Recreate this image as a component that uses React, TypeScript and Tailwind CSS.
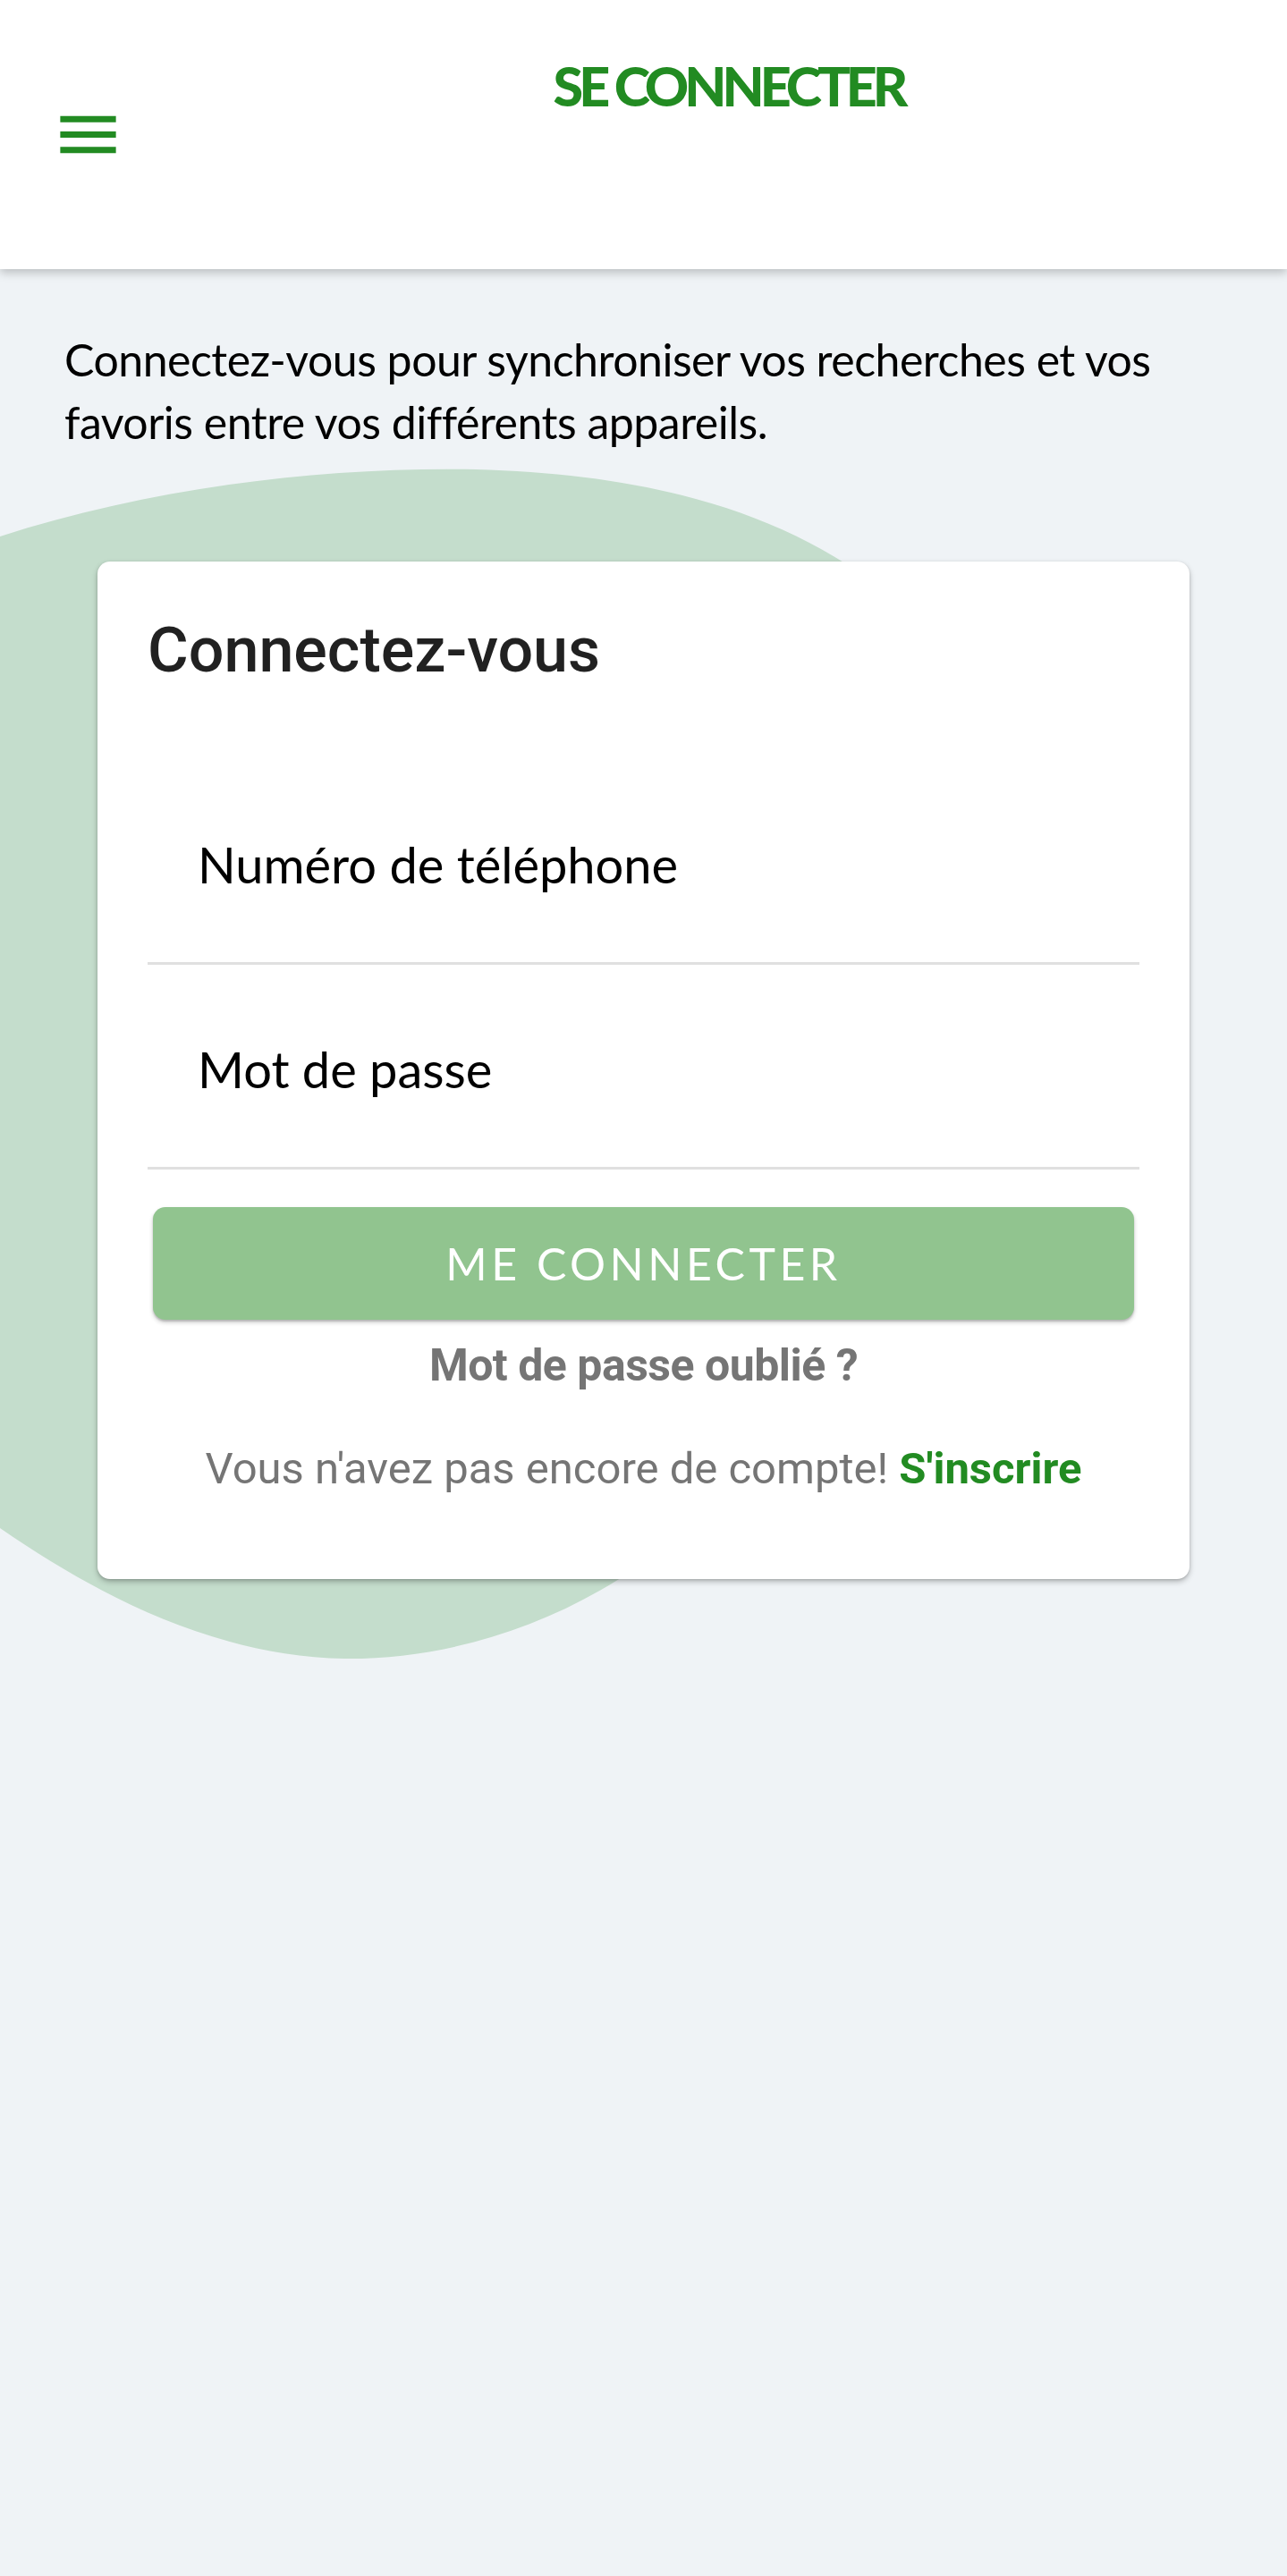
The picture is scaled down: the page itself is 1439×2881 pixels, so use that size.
import React from "react";

const GREEN = "#228b22";

function MenuIcon() {
  return (
    <svg viewBox="0 0 24 24" className="w-[83px] h-[83px]" fill={GREEN}>
      <path d="M3 18h18v-2H3zm0-5h18v-2H3zm0-7v2h18V6z" />
    </svg>
  );
}

function Blob() {
  return (
    <svg
      className="absolute left-0 top-0 pointer-events-none"
      width="1439"
      height="2000"
      viewBox="0 0 1439 2000"
    >
      <path
        d="M0 600 C 170 545, 360 522, 532 525 C 720 530, 880 570, 1000 670 C 1250 900, 1050 1600, 697 1763 C 600 1825, 490 1856, 385 1855 C 240 1852, 110 1785, 0 1709 Z"
        fill="#c4ddcc"
      />
    </svg>
  );
}

function Field({ label }: { label: string }) {
  return (
    <div className="pt-[89px] pb-[81px] pl-[56px] border-b-[3px] border-[#e0e0e0]">
      <div className="text-[56px] leading-none text-black">{label}</div>
    </div>
  );
}

export default function App() {
  return (
    <div
      className="relative min-h-[2881px] bg-[#eff3f6]"
      style={{ fontFamily: "Lato, 'Noto Sans', sans-serif" }}
    >
      {/* App bar */}
      <header className="relative z-20 h-[301px] bg-white flex shadow-[0_4px_10px_rgba(0,0,0,0.22)]">
        <div className="w-[190px] shrink-0 flex items-center pl-[57px]">
          <MenuIcon />
        </div>
        <div className="flex-1 text-center pt-[65px]">
          <span
            className="text-[61px] leading-none font-black tracking-[-5px]"
            style={{ color: GREEN }}
          >
            SE CONNECTER
          </span>
        </div>
      </header>

      <Blob />

      <main className="relative z-10">
        <p className="px-[72px] pt-[66px] text-[50px] leading-[70px] text-black tracking-[-0.5px]">
          Connectez-vous pour synchroniser vos recherches et vos favoris entre vos différents appareils.
        </p>

        {/* Card */}
        <div className="mt-[121px] mx-auto w-[1221px] bg-white rounded-[14px] shadow-[0_3px_6px_rgba(0,0,0,0.25),0_1px_3px_rgba(0,0,0,0.12)] px-[56px] pt-[47px] pb-[95px]">
          <h1
            className="text-[70px] leading-normal text-[#212121] font-medium mb-[70px]"
            style={{ fontFamily: "Roboto, sans-serif" }}
          >
            Connectez-vous
          </h1>

          <Field label="Numéro de téléphone" />
          <Field label="Mot de passe" />

          <button className="mt-[42px] mx-[6px] w-[1097px] h-[126px] rounded-[14px] bg-[#91c48f] text-white text-[50px] tracking-[4.5px] shadow-[0_3px_5px_rgba(0,0,0,0.2),0_2px_2px_rgba(0,0,0,0.14)]">
            ME CONNECTER
          </button>

          <div style={{ fontFamily: "Roboto, sans-serif" }} className="text-center">
            <p className="mt-[23px] text-[50px] leading-[57px] font-bold text-[#757575] tracking-[-0.5px]">
              Mot de passe oublié ?
            </p>
            <p className="mt-[58px] text-[49px] leading-[57px] text-[#757575]">
              Vous n'avez pas encore de compte!{" "}
              <span className="font-bold" style={{ color: GREEN }}>
                S'inscrire
              </span>
            </p>
          </div>
        </div>
      </main>
    </div>
  );
}
